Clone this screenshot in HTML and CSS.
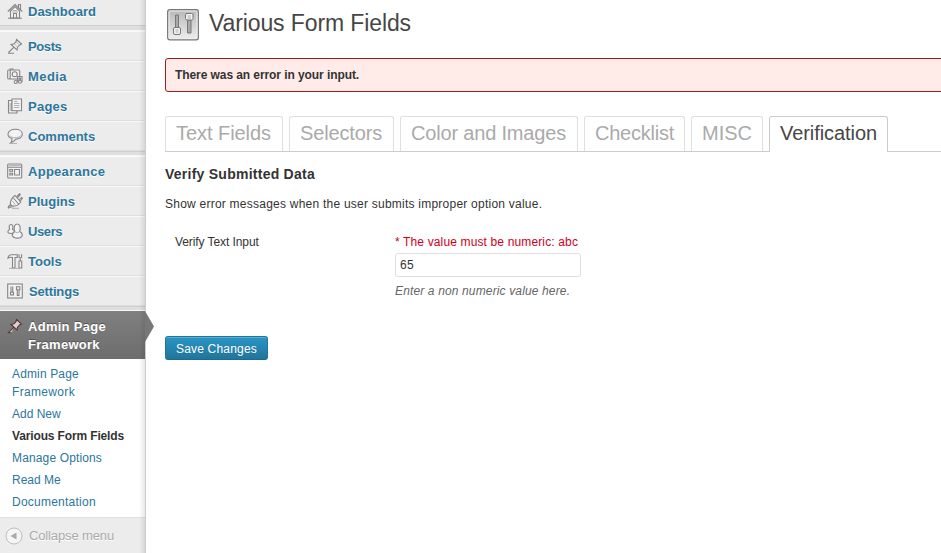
FILE: index.html
```html
<!DOCTYPE html>
<html lang="en">
<head>
<meta charset="utf-8">
<title>Various Form Fields</title>
<link rel="stylesheet" href="styles.css">
</head>
<body>
<div class="admin">
  <nav class="sidebar">
    <ul class="menu">
      <li class="item first"><svg class="icon" viewBox="0 0 16 16"><path class="fill" d="M3.500 8v7h9V8L8 3.500z"/><path d="M.8 8.500L8 1.500l7.200 7M11.500 4.500V1.500h2V6.500M1 15.200h14M6.500 15v-4.500h3V15"/><path class="thin" d="M6 7.500h4M5 9h6"/></svg><span class="t0">Dashboard</span></li>
      <li class="separator"></li>
      <li class="item"><svg class="icon" viewBox="0 0 16 16"><path class="fill" d="M9.500 1.500L14.500 6 12.500 7.200 10.500 9.200 10 12 4 6.500 7 5.800 9 3.700z"/><path d="M7 9.200L1.500 14.500M1 15.200h6"/><path class="thin" d="M9 4l3.500 3M7.500 6l2.700 2.700"/></svg><span class="tneg">Posts</span></li>
      <li class="item"><svg class="icon" viewBox="0 0 16 16"><rect class="fill" x=".7" y="2" width="12" height="9" rx="1"/><path d="M3 1.800V1h3v1M3.200 2v9"/><circle class="fill" cx="7.700" cy="6.300" r="2.500"/><path class="fill" d="M10.500 14V8.500h4.500V13.500h-1.500V10h-1.500v4z"/><circle class="fill" cx="8.700" cy="14" r="1.500"/><circle class="fill" cx="13" cy="13.800" r="1.500"/></svg><span class="t4">Media</span></li>
      <li class="item"><svg class="icon" viewBox="0 0 16 16"><path class="fill" d="M5 2.500H1.500v12.500h8.500V12.500H5z"/><path class="fill" d="M5 1h9.500v11.700H5z"/><path class="thin" d="M7 3.500h3.500M7 5.500h5.500M7 7.500h5.500M7 9.500h5.500M3.200 5v8"/></svg><span class="t2">Pages</span></li>
      <li class="item"><svg class="icon" viewBox="0 0 16 16"><path class="fill" d="M8.300 1.300c4 0 7 2 7 4.900s-3 4.900-6.500 4.900c-1.300 1.500-2.500 2.800-5 3.700 1-1.500 1.300-2.700 1.200-4.200C2.500 9.700 1 8.200 1 6.200c0-2.900 3.200-4.900 7.300-4.900z"/><path class="thin" d="M3 7.500c1 3 9 3 10.500 0M2 15.400h8"/></svg><span class="t0">Comments</span></li>
      <li class="separator"></li>
      <li class="item"><svg class="icon" viewBox="0 0 16 16"><rect class="fill" x=".7" y="1" width="14" height="14" rx="1"/><path d="M1 4.200h13.500M7.500 6.500h5v5.500h-5zM2.800 6.500h2.700v1.700H2.800zM2.800 10.300h2.700V12H2.800z"/><path class="thin" d="M2 2.600h11.500"/></svg><span class="t3">Appearance</span></li>
      <li class="item"><svg class="icon" viewBox="0 0 16 16"><path class="fill" d="M4 12c-1.500 0-2.500 1-3 3M9.500 4L12.500.8l.8.700L10.500 5M12 7.500l2.500-3 .9.700L13 8.500"/><path class="fill" d="M8 2.500l5.700 6.500c-2.200 3-5 4.700-8.500 4L3.200 11C3.500 7.500 5.200 4.500 8 2.500z"/><path d="M6.500 5l5 6M5.500 14c-1.500-.5-3 .2-4.300 1.200"/><path class="thin" d="M5.300 8l3.200 3.700M5 15.300h7"/></svg><span class="t0">Plugins</span></li>
      <li class="item"><svg class="icon" viewBox="0 0 16 16"><path class="fill" d="M.8 9.200c0-1.500.8-2.500 1.800-3C1.700 3.800 2.300 1.500 4 1.500S6.500 3.800 5.500 6.200C7 7 7.500 8 7.500 9.200c-1 1.800-5.500 1.800-6.700 0z"/><path class="fill" d="M5.300 12.500c0-2 1-3.300 2.500-4C6.200 4.500 7.500 1 10.200 1s4 3.500 2.300 7.500c1.800.7 2.800 2 2.800 4-1.300 3.500-8.700 3.500-10 0z"/><path class="thin" d="M7.500 8.500c1.500 1.500 4 1.500 5.200 0"/></svg><span class="tneg">Users</span></li>
      <li class="item"><svg class="icon" viewBox="0 0 16 16"><path class="fill" d="M1 5c.3-2 1.500-3.200 3.500-3.200h5.800v2.700H8V15H5.500V4.500C4 4 2.500 4 1 5z"/><path class="fill" d="M12 8h2.700v7H12z"/><path d="M12 1.300v3l1.300 1 1.300-1v-3M13.300 5v3"/><path class="thin" d="M2 15.400h12"/></svg><span class="t0">Tools</span></li>
      <li class="item"><svg class="icon" viewBox="0 0 16 16"><rect class="fill" x=".7" y="1" width="14.600" height="14"/><path d="M4 3.500v5.500M5.700 3.500v5.500M3.500 9.200h3v2.700h-3zM9.500 3.700h3.300v3H9.500zM10.300 7v5.500h1.700V7"/></svg><span class="settings">Settings</span></li>
      <li class="separator"></li>
      <li class="item current"><svg class="icon pin" viewBox="0 0 16 16"><path d="M9.500 1.500L14.500 6 12.500 7 10.500 9.200 10 12 4 6.500 7 5.800 9 3.700z"/><path d="M7 9.200L1.500 14.700h3"/></svg><span class="t3">Admin Page Framework</span><svg class="arrow" viewBox="0 0 9 30" preserveAspectRatio="none"><path d="M0 0l9 15-9 15z"/></svg></li>
    </ul>
    <ul class="submenu">
      <li class="s1">Admin Page<br><span class="s3">Framework</span></li>
      <li>Add New</li>
      <li class="active">Various Form Fields</li>
      <li class="s1">Manage Options</li>
      <li>Read Me</li>
      <li class="s2">Documentation</li>
    </ul>
    <div class="collapse"><svg viewBox="0 0 18 18"><circle cx="9" cy="9" r="8"/><path d="M5.500 9l6-3.500v7z"/></svg><span>Collapse menu</span></div>
  </nav>
  <main class="content">
    <header class="title">
      <svg viewBox="0 0 32 32"><defs><linearGradient id="g" x2="0" y2="1"><stop offset="0" stop-color="#b8b8b8"/><stop offset="1" stop-color="#eee"/></linearGradient></defs><rect x=".7" y=".7" width="30.600" height="30.100" rx="2" fill="url(#g)" stroke="#777" stroke-width="1.300"/><rect x="2" y="2" width="28" height="27.500" rx="1" fill="none" stroke="#eee"/><g stroke="#777"><path fill="#aaa" d="M8.500 6h3v13h-3zM20.500 11h3.500v13h-3.500z"/><rect x="6.500" y="18.500" width="7" height="7" rx="1.500" fill="#f4f4f4"/><rect x="18.500" y="4.500" width="7.500" height="6.500" rx="1.500" fill="#f4f4f4"/><path d="M8.500 21h3M8.500 23h3M20.500 7h3.500M20.500 9h3.500" stroke="#aaa"/></g></svg>
      <h1>Various Form Fields</h1>
    </header>
    <div class="error">There was an error in your input.</div>
    <div class="tabs">
      <a class="tab text">Text Fields</a><a class="tab sel">Selectors</a><a class="tab color">Color and Images</a><a class="tab check">Checklist</a><a class="tab misc">MISC</a><a class="tab on">Verification</a>
    </div>
    <h2>Verify Submitted Data</h2>
    <p class="intro">Show error messages when the user submits improper option value.</p>
    <div class="field">
      <label for="v">Verify Text Input</label>
      <div class="control">
        <div class="invalid">* The value must be numeric: abc</div>
        <input id="v" type="text" value="65">
        <div class="hint">Enter a non numeric value here.</div>
      </div>
    </div>
    <button class="save">Save Changes</button>
  </main>
</div>
</body>
</html>
```
FILE: styles.css
```css
* { box-sizing: border-box; }
body { margin: 0; background: #fff; color: #333; font: 12px/18px "Liberation Sans", Arial, sans-serif; overflow: hidden; }
ul { list-style: none; margin: 0; padding: 0; }
.admin { display: flex; height: 553px; }

.sidebar { position: relative; flex: none; width: 146px; background: #ececec; border-right: 1px solid #ccc; }
.sidebar::after { content: ""; position: absolute; top: 0; right: 0; bottom: 0; width: 6px; background: linear-gradient(to right, rgba(0,0,0,0), rgba(0,0,0,.09)); }
.item { display: flex; align-items: flex-start; height: 30px; padding: 6px 0 0 7px; border-top: 1px solid #f9f9f9; border-bottom: 1px solid #dfdfdf; color: #2c769c; font-size: 13px; font-weight: bold; text-shadow: 0 1px 0 #fff; }
.item.first { height: 25px; padding-top: 3px; border: 0; }
.separator { height: 5px; background: #dfdfdf; border-top: 1px solid #cfcfcf; border-bottom: 1px solid #f7f7f7; }
.item.first + .separator { height: 6px; }
.icon { flex: none; width: 16px; height: 16px; margin-right: 5px; fill: none; stroke: #858585; stroke-width: 1.1; }
.icon .fill { fill: #f3f3f3; }
.icon .thin { stroke: #b0b0b0; stroke-width: 1; }
.t0 { letter-spacing: 0; }
.tneg { letter-spacing: -.4px; }
.t4 { letter-spacing: .43px; }
.t2 { letter-spacing: .24px; }
.t3 { letter-spacing: .28px; }
.settings { margin-left: 1px; letter-spacing: -.16px; }
.current { position: relative; height: 48px; padding-top: 7px; border: 0; background: linear-gradient(#808080, #6d6d6d); color: #fff; text-shadow: 0 -1px 0 #555; }
.current span { width: 90px; }
.pin { fill: #e8cfcc; stroke: #4a3c3a; }
.arrow { position: absolute; z-index: 1; left: 145px; top: 0; width: 9px; height: 31px; fill: #777; }

.submenu { height: 158px; padding: 6px 0 0 12px; background: #fff; color: #2c769c; }
.submenu li { margin-bottom: 4px; }
.s1 { letter-spacing: .14px; }
.s2 { letter-spacing: .24px; }
.s3 { letter-spacing: .33px; }
.submenu .active { color: #333; font-weight: bold; letter-spacing: -.14px; }
.collapse { display: flex; align-items: center; height: 36px; padding-left: 5px; border-top: 1px solid #dfdfdf; color: #aaa; font-size: 13px; letter-spacing: -.13px; text-shadow: 0 1px 0 #fff; }
.collapse svg { width: 18px; height: 18px; margin-right: 6px; fill: #aaa; }
.collapse circle { fill: #f5f5f5; stroke: #c0c0c0; }

.content { flex: 1; min-width: 0; padding-left: 19px; }
.title { display: flex; height: 58px; padding: 9px 0 0 2px; }
.title svg { width: 32px; height: 32px; }
.title h1 { margin: -1px 0 0 10px; color: #464646; font-size: 23px; line-height: 30px; font-weight: normal; letter-spacing: -.11px; }
.error { height: 34px; margin-right: -10px; padding: 7px 9px; border: 1px solid #a01c1c; border-radius: 3px; background: #ffebe8; font-weight: bold; letter-spacing: -.08px; }
.tabs { display: flex; gap: 6px; height: 36px; margin-top: 24px; border-bottom: 1px solid #ccc; }
.tab { flex: none; height: 35px; padding: 4px 10px; border: 1px solid #dfdfdf; border-bottom: 0; border-radius: 3px 3px 0 0; color: #aaa; font-size: 20px; line-height: 24px; white-space: nowrap; }
.text { width: 118px; letter-spacing: -.05px; }
.sel { width: 105px; letter-spacing: -.15px; }
.color { width: 178px; letter-spacing: -.18px; }
.check { width: 101px; letter-spacing: -.24px; }
.misc { width: 72px; }
.on { width: 119px; height: 36px; border-color: #ccc; background: #fff; color: #464646; letter-spacing: -.07px; }

h2 { margin: 13px 0 0; font-size: 14px; line-height: 18px; letter-spacing: .25px; }
.intro { margin: 12px 0 0; letter-spacing: .235px; }
.field { display: flex; margin-top: 20px; }
.field label { width: 230px; padding-left: 10px; letter-spacing: -.08px; }
.invalid { color: #d00020; letter-spacing: .14px; }
.field input { display: block; width: 186px; height: 24px; margin: 2px 0 0; padding: 3px 4px; border: 1px solid #dfdfdf; border-radius: 3px; background: #fff; color: #333; font: 12px/15px "Liberation Sans", Arial, sans-serif; letter-spacing: .3px; }
.hint { margin-top: 5px; color: #666; font-style: italic; letter-spacing: .14px; }
.save { display: block; width: 103px; height: 24px; margin-top: 36px; padding: 1px 0 0; border: 1px solid #21759b; border-bottom-color: #1e6a8d; border-radius: 3px; background: linear-gradient(#2a95c5, #21759b); box-shadow: inset 0 1px 0 rgba(120,200,230,.5); color: #fff; font: 12px/20px "Liberation Sans", Arial, sans-serif; letter-spacing: .19px; text-shadow: 0 1px 0 rgba(0,0,0,.1); }
```
